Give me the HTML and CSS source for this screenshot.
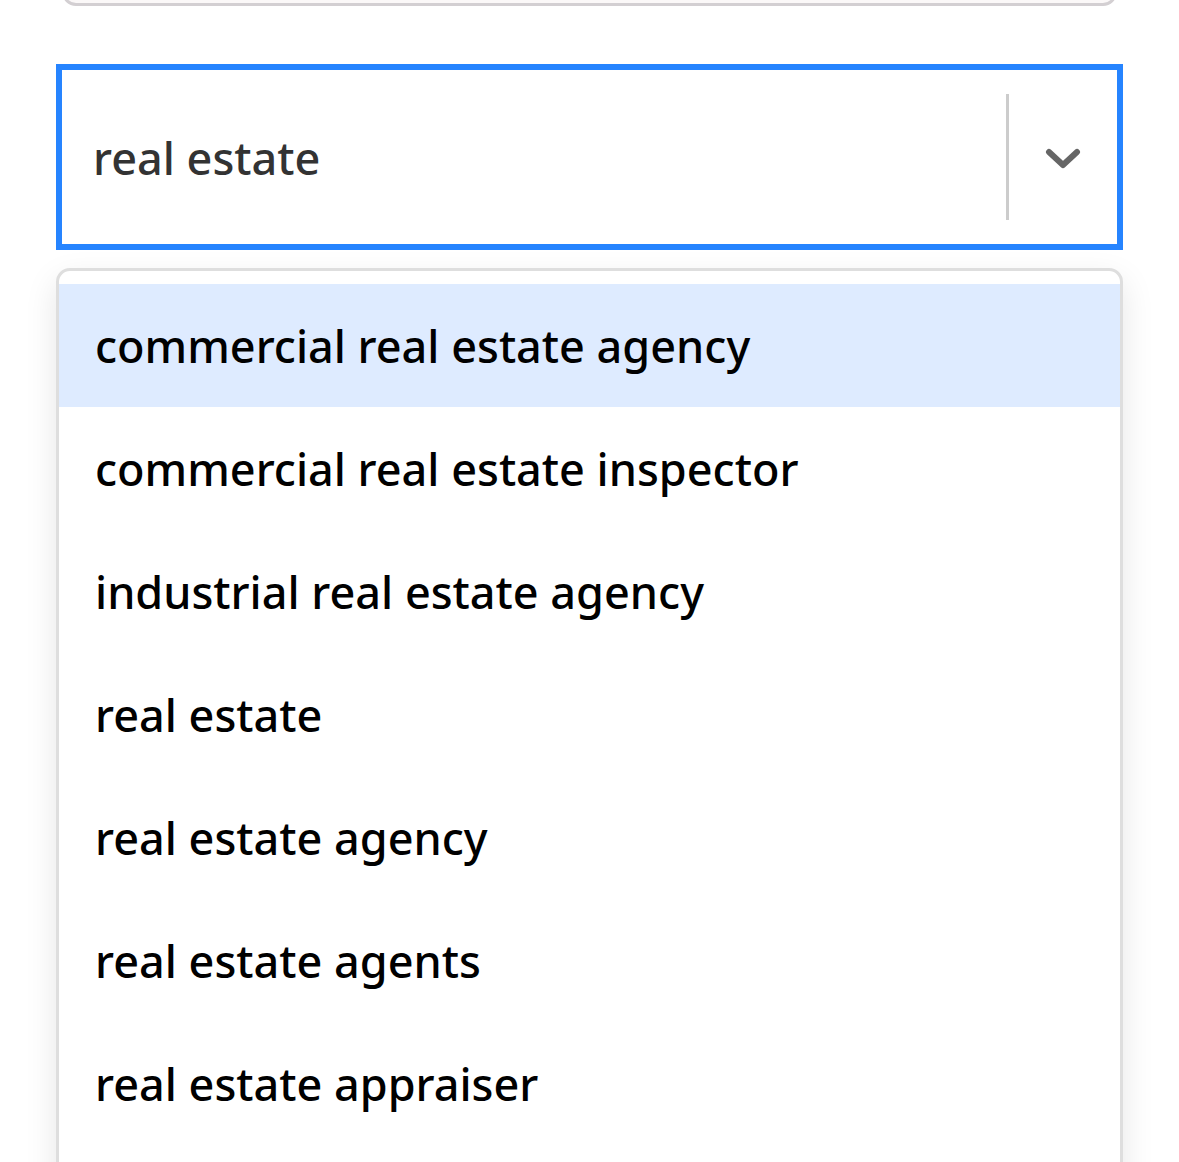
FILE: index.html
```html
<!DOCTYPE html>
<html lang="en">
<head>
<meta charset="utf-8">
<link rel="stylesheet" href="styles.css">
<title>Select</title>
</head>
<body>
<div class="page">
  <div class="prev-field"></div>
  <div class="select">
    <div class="value">real estate</div>
    <div class="indicators">
      <span class="sep"></span>
      <span class="chevron">
        <svg width="36" height="22" viewBox="0 0 36 22"><path d="M4 4 L18 17 L32 4" fill="none" stroke="#666" stroke-width="6" stroke-linecap="round" stroke-linejoin="round"/></svg>
      </span>
    </div>
  </div>
  <div class="menu">
    <div class="option focused">commercial real estate agency</div>
    <div class="option">commercial real estate inspector</div>
    <div class="option">industrial real estate agency</div>
    <div class="option">real estate</div>
    <div class="option">real estate agency</div>
    <div class="option">real estate agents</div>
    <div class="option">real estate appraiser</div>
  </div>
</div>
</body>
</html>
```
FILE: styles.css
```css
html, body {
  margin: 0;
  padding: 0;
  background: #fff;
  height: 1162px;
  overflow: hidden;
}
body {
  font-family: "Noto Sans", "Lato", sans-serif;
}
.page {
  padding: 0 56px 0 56px;
  width: 1067px;
}
.prev-field {
  margin: -40px 6px 0 6px;
  height: 40px;
  border: 3px solid #d3cfd2;
  border-radius: 14px;
  background: #fbf8f8;
}
.select {
  margin-top: 58px;
  height: 174px;
  border: 6px solid #2684ff;
  display: flex;
  align-items: center;
  background: #fff;
}
.value {
  flex: 1;
  padding-left: 31px;
  font-size: 45px;
  font-weight: 500;
  color: #333;
}
.indicators {
  display: flex;
  align-items: center;
  height: 100%;
}
.sep {
  width: 3px;
  height: 126px;
  background: #ccc;
}
.chevron {
  width: 108px;
  padding-top: 4px;
  display: flex;
  justify-content: center;
  align-items: center;
}
.chevron svg { display: block; }
.menu {
  margin-top: 18px;
  border: 3px solid #dedede;
  border-radius: 14px;
  padding-top: 13px;
  padding-bottom: 60px;
  box-shadow: 0 12px 33px rgba(0,0,0,0.1);
  background: #fff;
}
.option {
  height: 123px;
  display: flex;
  align-items: center;
  padding-left: 36px;
  font-size: 45px;
  font-weight: 500;
  color: #000;
}
.option.focused {
  background: #deebff;
}
```
